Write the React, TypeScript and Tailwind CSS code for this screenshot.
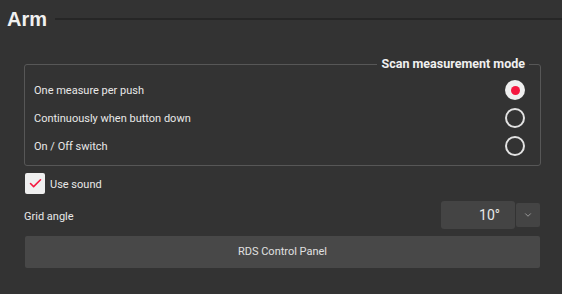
import { Check, ChevronDown } from 'lucide-react'

// Settings pane for the arm: scan mode, sound, grid angle.

const modes = ['One measure per push', 'Continuously when button down', 'On / Off switch']

function Radio({ checked }: { checked: boolean }) {
  return checked ? (
    <span className="w-5 h-5 rounded-full bg-[#efefef] flex items-center justify-center">
      <span className="w-[9px] h-[9px] rounded-full bg-[#f5173f]" />
    </span>
  ) : (
    <span className="w-5 h-5 rounded-full border-2 border-[#e2e2e2]" />
  )
}

export default function App() {
  return (
    <div className="w-[562px] h-[294px] bg-[#333333] text-[#e8e8e8] overflow-hidden font-['Roboto',sans-serif] text-[11px]">
      <div className="flex items-center pt-[5px] pl-[7px]">
        <span className="text-[20px] font-bold leading-[28px] text-[#f0f0f0] font-['Liberation_Sans',sans-serif]">Arm</span>
        <div className="flex-1 h-[2px] bg-[#262626] ml-2" />
      </div>

      <fieldset className="ml-6 mr-[21px] mt-[23px] border border-[#575757] rounded-[3px] pb-[5px]">
        <legend className="ml-auto mr-[11px] px-[4px] text-[12.5px] font-bold leading-[16px] text-[#f0f0f0]">
          Scan measurement mode
        </legend>
        <div className="pt-1">
          {modes.map((m, i) => (
            <div key={m} className="h-7 flex items-center justify-between pl-[9px] pr-[15px]">
              <span className="pt-[2px]">{m}</span>
              <Radio checked={i === 0} />
            </div>
          ))}
        </div>
      </fieldset>

      <div className="flex items-center gap-[5px] ml-[25px] mt-[7px]">
        <span className="w-5 h-[21px] rounded-[2px] bg-[#efefef] flex items-center justify-center">
          <Check size={15} strokeWidth={2.5} className="text-[#f5173f]" />
        </span>
        <span className="pt-[3px]">Use sound</span>
      </div>

      <div className="flex items-center ml-6 mr-[22px] mt-[7px]">
        <span className="flex-1 pt-[5px]">Grid angle</span>
        <div className="w-[74px] h-7 bg-[#444444] rounded-[3px] flex items-center justify-end pr-[15px] text-[14px]">
          10°
        </div>
        <button className="w-6 h-6 ml-px bg-[#444444] rounded-[2px] flex items-center justify-center text-[#a8a8a8]">
          <ChevronDown size={10} strokeWidth={2} />
        </button>
      </div>

      <button className="block ml-[25px] mt-[7px] w-[515px] h-8 bg-[#484848] rounded-[2px] text-[#e0e0e0]">
        RDS Control Panel
      </button>
    </div>
  )
}
